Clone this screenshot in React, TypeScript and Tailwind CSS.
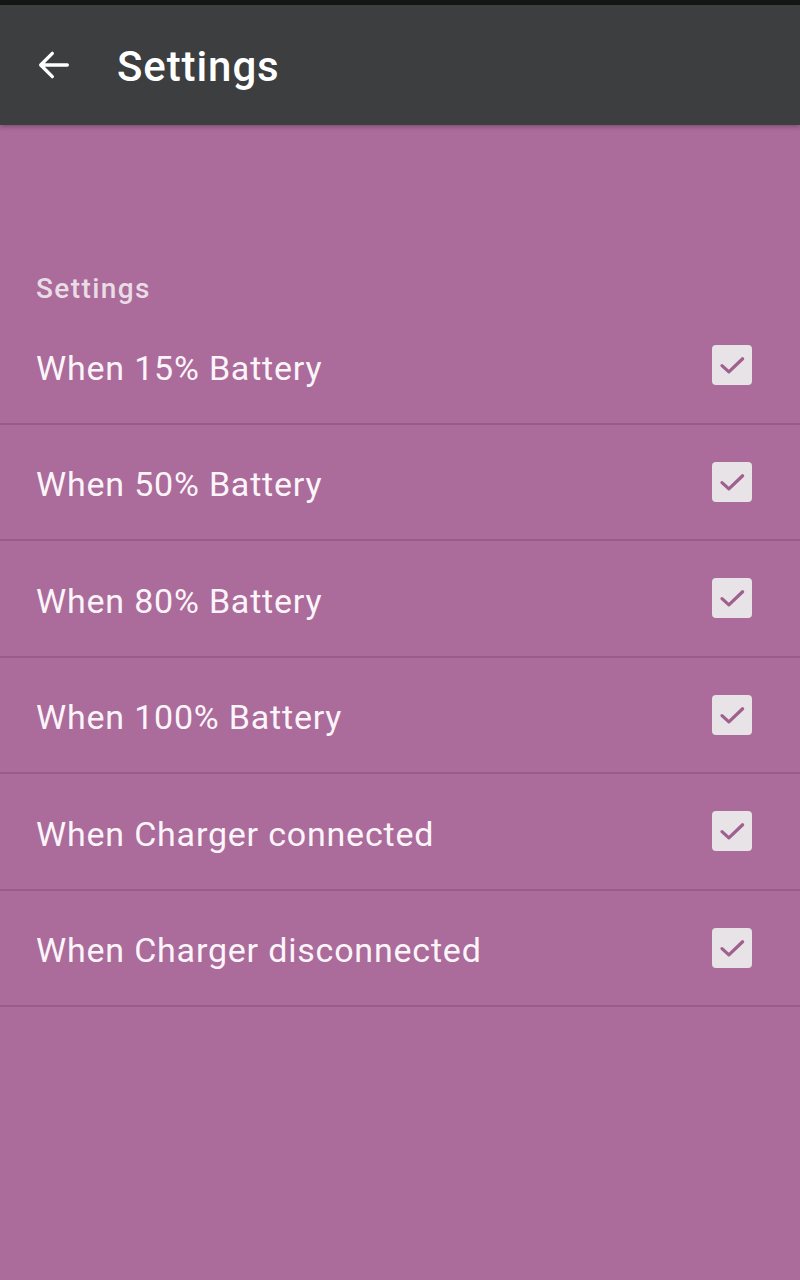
const items = [
  "When 15% Battery",
  "When 50% Battery",
  "When 80% Battery",
  "When 100% Battery",
  "When Charger connected",
  "When Charger disconnected",
];

function CheckBox() {
  return (
    <div className="w-[40px] h-[40px] rounded-[4px] bg-[#e7e3e6] flex items-center justify-center">
      <svg width="30" height="30" viewBox="0 0 24 24" fill="none">
        <path
          d="M4 12.5l5.5 5L20.5 7"
          stroke="#a0608f"
          strokeWidth="2.6"
          strokeLinecap="round"
          strokeLinejoin="round"
        />
      </svg>
    </div>
  );
}

export default function App() {
  return (
    <div
      className="w-[800px] h-[1280px] bg-[#ab6b9b] flex flex-col"
      style={{ fontFamily: "Roboto, 'Liberation Sans', sans-serif" }}
    >
      <div className="h-[5px] bg-[#141515]" />
      <header className="h-[120px] bg-[#3c3e3f] flex items-center shadow-[0_2px_4px_rgba(0,0,0,0.25)]">
        <div className="w-[117px] flex items-center pl-[34px]">
          <svg width="40" height="40" viewBox="0 0 24 24" fill="none">
            <path
              d="M20 12H4.5M11 5l-7 7 7 7"
              stroke="#ffffff"
              strokeWidth="2"
              strokeLinecap="round"
              strokeLinejoin="round"
            />
          </svg>
        </div>
        <h1 className="text-white text-[42px] font-medium leading-none tracking-[0.9px] pt-[4px]">
          Settings
        </h1>
      </header>

      <main className="pt-[150px]">
        <p className="px-[36px] text-[28px] font-medium text-[#e8dce5] leading-none tracking-[1.4px] h-[33px]">
          Settings
        </p>
        {items.map((label) => (
          <div
            key={label}
            className="h-[116.5px] flex items-center justify-between pl-[36px] pr-[48px] border-b-2 border-[#9a5b8a]"
          >
            <span className="text-[34px] text-[#fbf5f9] tracking-[0.8px] leading-none pt-[5px]">
              {label}
            </span>
            <CheckBox />
          </div>
        ))}
      </main>
    </div>
  );
}
